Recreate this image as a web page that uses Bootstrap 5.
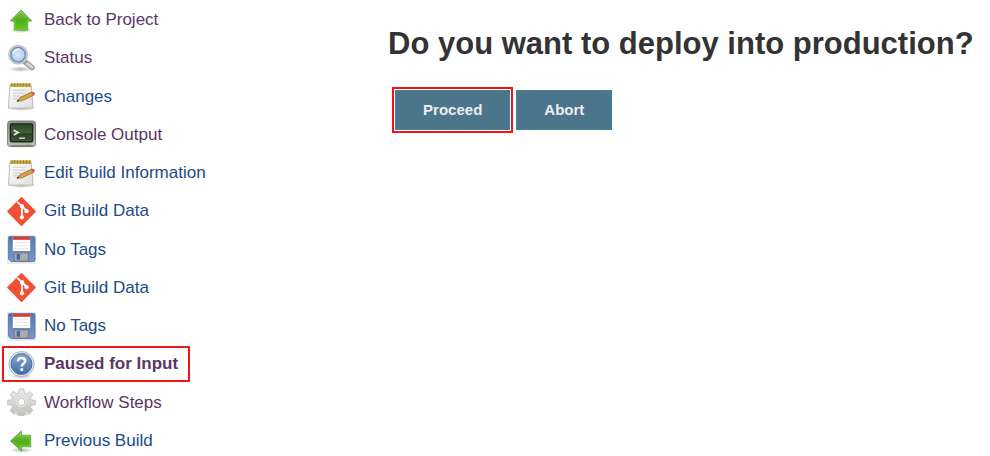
<!DOCTYPE html>
<html lang="en">
<head>
<meta charset="utf-8">
<meta name="viewport" content="width=device-width, initial-scale=1">
<title>Paused for Input</title>
<link href="https://cdn.jsdelivr.net/npm/bootstrap@5.3.0/dist/css/bootstrap.min.css" rel="stylesheet">
<style>
body { font-family: "Liberation Sans", Arial, sans-serif; color: #333; background: #fff; }
.side { flex: 0 0 39%; }
.task-list { padding: 5px 0 0 5px; }
.task { font-size: 17px; line-height: 30px; gap: 8px; padding: 0 9px 0 2px; color: #204a87; }
.task svg { width: 29px; height: 29px; flex: none; }
.task.seen { color: #5c3566; }
.task.current { outline: 2px solid #f01414; outline-offset: 1px; }
.prompt { padding: 24px 0 0 2px; }
h1 { font-size: 31px; line-height: 40px; }
.actions { gap: 6px; padding: 2px 0 0 7px; }
.btn-step { --bs-btn-color: #eee; --bs-btn-bg: #4b758b; --bs-btn-border-color: #47809a; --bs-btn-hover-color: #fff; --bs-btn-hover-bg: #3b6478; --bs-btn-hover-border-color: #3b6478; --bs-btn-border-radius: 0; --bs-btn-font-size: 15px; --bs-btn-padding-x: 27px; --bs-btn-padding-y: 9px; line-height: 20px; }
.marked { outline: 2px solid #f01414; outline-offset: 1px; }
</style>
<script src="https://cdn.jsdelivr.net/npm/bootstrap@5.3.0/dist/js/bootstrap.bundle.min.js"></script>
</head>
<body>
<svg width="0" height="0" class="position-absolute" aria-hidden="true">
<defs>
<linearGradient id="green" x1="0" y1="0" x2="0" y2="1"><stop offset="0" stop-color="#8ac85c"/><stop offset=".5" stop-color="#4fae1c"/><stop offset="1" stop-color="#62c813"/></linearGradient>
<linearGradient id="silver" x1="0" y1="0" x2="0" y2="1"><stop offset="0" stop-color="#ebebe9"/><stop offset="1" stop-color="#c0c0bd"/></linearGradient>
<linearGradient id="paper" x1="0" y1="0" x2="1" y2="1"><stop offset="0" stop-color="#fff"/><stop offset="1" stop-color="#dededc"/></linearGradient>
<linearGradient id="crt" x1="0" y1="0" x2="0" y2="1"><stop offset="0" stop-color="#31482c"/><stop offset=".5" stop-color="#435f38"/><stop offset=".55" stop-color="#2b4027"/><stop offset="1" stop-color="#3f5937"/></linearGradient>
<linearGradient id="frame" x1="0" y1="0" x2="0" y2="1"><stop offset="0" stop-color="#8c8e88"/><stop offset="1" stop-color="#babdb6"/></linearGradient>
<linearGradient id="disk" x1="0" y1="0" x2="0" y2="1"><stop offset="0" stop-color="#5579b5"/><stop offset="1" stop-color="#7698cb"/></linearGradient>
<radialGradient id="glass"><stop offset="0" stop-color="#d8e8f8"/><stop offset="1" stop-color="#aecbec"/></radialGradient>
<linearGradient id="help" x1="0" y1="0" x2="0" y2="1"><stop offset="0" stop-color="#84a7d4"/><stop offset="1" stop-color="#426da6"/></linearGradient>
<radialGradient id="shade"><stop offset="0" stop-color="#000" stop-opacity=".3"/><stop offset="1" stop-color="#000" stop-opacity="0"/></radialGradient>
<symbol id="i-up" viewBox="0 0 30 30"><ellipse cx="15" cy="25" rx="12" ry="3" fill="url(#shade)"/><path d="M14.500 4L25.500 15.500H21.500V25H7.500V15.500H3.500Z" fill="url(#green)" stroke="#58a436" stroke-width=".8" stroke-linejoin="round"/><path d="M14.500 5.500L23 14.500H20.500V24H8.500V14.500H6Z" fill="none" stroke="#a9e17a" stroke-opacity=".35"/></symbol>
<symbol id="i-left" viewBox="0 0 30 30"><ellipse cx="15" cy="25" rx="12" ry="3" fill="url(#shade)"/><path d="M3.500 15.500L15 5V9.500H24.500V21.500H15V26Z" fill="url(#green)" stroke="#58a436" stroke-width=".8" stroke-linejoin="round"/><path d="M5.500 15.500L14 7.500V10.500H23.500V20.500H14V23.500Z" fill="none" stroke="#a9e17a" stroke-opacity=".35"/></symbol>
<symbol id="i-search" viewBox="0 0 30 30"><ellipse cx="14" cy="26" rx="13" ry="3" fill="url(#shade)"/><path d="M18 18L26 24.500" stroke="#999b96" stroke-width="5.500" stroke-linecap="round"/><path d="M21 20.500L26 24" stroke="#d3d3d0" stroke-width="3" stroke-linecap="round"/><circle cx="11.500" cy="11" r="9" fill="url(#glass)" stroke="#c3c5c2" stroke-width="2.600"/><circle cx="11.500" cy="11" r="7.400" fill="none" stroke="#658dc0" stroke-width="1.300"/><path d="M6.500 10A5 5 0 0 1 13 6" stroke="#fff" stroke-width="2" stroke-opacity=".6" fill="none"/></symbol>
<symbol id="i-note" viewBox="0 0 30 30"><ellipse cx="15" cy="27.500" rx="14" ry="2.500" fill="url(#shade)"/><path d="M3 3.500H25L27 27H1.500Z" fill="url(#paper)" stroke="#b8b9b5"/><path d="M3.500 1.500H25V5H3.500Z" fill="#c4a832"/><path d="M5 1V5M8 1V5M11 1V5M14 1V5M17 1V5M20 1V5M23 1V5" stroke="#9b8622" stroke-width="1"/><path d="M6 8.500H20M6 11.500H19M6 14.500H14M6 17.500H11" stroke="#cccdca"/><path d="M10.500 20L13.500 16L25.500 10.500L28 13.500L15.500 19.500Z" fill="#d8a042" stroke="#9e6820" stroke-width=".8"/><path d="M10.500 20L12 18.500" stroke="#333" stroke-width="1.300"/><path d="M24.500 11L26.500 10Q28.500 10 29 12L27.500 13.800Z" fill="#df4f42"/></symbol>
<symbol id="i-console" viewBox="0 0 30 30"><rect x=".5" y="1" width="29" height="26.500" rx="3" fill="url(#frame)" stroke="#858782"/><path d="M3 26H27L25 28H5Z" fill="#777a74"/><rect x="3.500" y="4" width="23" height="18.500" rx="1.500" fill="url(#crt)" stroke="#1c2819" stroke-width="1.400"/><path d="M7 10.500L11.500 13L7 15.500" fill="none" stroke="#dcefd6" stroke-width="1.800"/><path d="M12.500 18.800H18.500" stroke="#c2d9bb" stroke-width="1.600"/><path d="M20 25H22.500" stroke="#78c43e" stroke-width="1.500"/></symbol>
<symbol id="i-git" viewBox="0 0 30 30"><path d="M15 1L29 15L15 29L1 15Z" fill="#f05133" stroke="#f05133" stroke-width="1.800" stroke-linejoin="round"/><path d="M10.500 5L15.500 9.500V21.500M15.500 9.500L20.500 14.500" fill="none" stroke="#fff" stroke-width="1.900"/><circle cx="15.500" cy="9.500" r="2.200" fill="#fff"/><circle cx="20.200" cy="14.700" r="2.200" fill="#fff"/><circle cx="15.500" cy="21" r="2.200" fill="#fff"/></symbol>
<symbol id="i-disk" viewBox="0 0 30 30"><path d="M0 0H30V30H0Z" fill="#ececea"/><path d="M3 1.500H27.500Q29 1.500 29 3V25.500Q29 27.500 27 27.500H4.500L1.500 25V3Q1.500 1.500 3 1.500Z" fill="url(#disk)" stroke="#5d7db2"/><path d="M6 2H24V16.500H6Z" fill="#fff"/><path d="M6 2H24V5H6Z" fill="#e23b2b"/><path d="M8 8H22M8 11H22M8 14H22" stroke="#e5e5e5"/><path d="M7.500 18.500H22V27H7.500Z" fill="#a9aca9" stroke="#68707b" stroke-width=".8"/><path d="M10 19.500H13.500V25.500H10Z" fill="#4266a0"/><path d="M3 3.500H4.500" stroke="#263f67"/></symbol>
<symbol id="i-help" viewBox="0 0 30 30"><ellipse cx="15" cy="27" rx="12" ry="3" fill="url(#shade)"/><circle cx="15" cy="14.500" r="13" fill="#e0e5ec" stroke="#a3b3c8"/><circle cx="15" cy="14.500" r="10.800" fill="url(#help)" stroke="#3f6ba5"/><path d="M11.300 11.800Q11.500 8.300 15 8.300Q18.800 8.300 18.800 11.300Q18.800 13 17 14.200Q15.300 15.300 15.300 17" fill="none" stroke="#fff" stroke-width="2.600"/><circle cx="15.300" cy="20.300" r="1.600" fill="#fff"/></symbol>
<symbol id="i-gear" viewBox="0 0 30 30"><ellipse cx="15" cy="26.500" rx="11" ry="3" fill="url(#shade)"/><path d="M12.500 1H17.500L18 5L20.300 6L23.500 3.500L26.800 7L24.300 10L25.200 12.300L29.300 12.700V17.300L25.200 17.700L24.300 20L26.800 23.200L23.500 26.500L20.300 24L18 25L17.500 28.500H12.500L12 25L9.700 24L6.500 26.500L3.200 23.200L5.700 20L4.800 17.700L.7 17.300V12.700L4.800 12.300L5.700 10L3.200 7L6.500 3.500L9.700 6L12 5Z" fill="url(#silver)" stroke="#b9bab6" stroke-width=".8"/><circle cx="15" cy="14.500" r="4.600" fill="none" stroke="#e3e3e0" stroke-width="1.600"/><circle cx="15" cy="14.500" r="3.600" fill="#fff" stroke="#babbb7" stroke-width=".8"/></symbol>
</defs>
</svg>
<div class="d-flex min-vh-100">
<nav class="side" aria-label="Build tasks">
<ul class="task-list list-unstyled vh-100 d-flex flex-column justify-content-between align-items-start mb-0">
<li><a class="task seen d-flex align-items-center text-decoration-none" href="#"><svg aria-hidden="true"><use href="#i-up"/></svg>Back to Project</a></li>
<li><a class="task seen d-flex align-items-center text-decoration-none" href="#"><svg aria-hidden="true"><use href="#i-search"/></svg>Status</a></li>
<li><a class="task d-flex align-items-center text-decoration-none" href="#"><svg aria-hidden="true"><use href="#i-note"/></svg>Changes</a></li>
<li><a class="task seen d-flex align-items-center text-decoration-none" href="#"><svg aria-hidden="true"><use href="#i-console"/></svg>Console Output</a></li>
<li><a class="task d-flex align-items-center text-decoration-none" href="#"><svg aria-hidden="true"><use href="#i-note"/></svg>Edit Build Information</a></li>
<li><a class="task d-flex align-items-center text-decoration-none" href="#"><svg aria-hidden="true"><use href="#i-git"/></svg>Git Build Data</a></li>
<li><a class="task d-flex align-items-center text-decoration-none" href="#"><svg aria-hidden="true"><use href="#i-disk"/></svg>No Tags</a></li>
<li><a class="task d-flex align-items-center text-decoration-none" href="#"><svg aria-hidden="true"><use href="#i-git"/></svg>Git Build Data</a></li>
<li><a class="task d-flex align-items-center text-decoration-none" href="#"><svg aria-hidden="true"><use href="#i-disk"/></svg>No Tags</a></li>
<li><a class="task seen current fw-bold d-flex align-items-center text-decoration-none" href="#" aria-current="page"><svg aria-hidden="true"><use href="#i-help"/></svg>Paused for Input</a></li>
<li><a class="task seen d-flex align-items-center text-decoration-none" href="#"><svg aria-hidden="true"><use href="#i-gear"/></svg>Workflow Steps</a></li>
<li><a class="task d-flex align-items-center text-decoration-none" href="#"><svg aria-hidden="true"><use href="#i-left"/></svg>Previous Build</a></li>
</ul>
</nav>
<main class="prompt flex-grow-1">
<h1 class="fw-bold mb-4">Do you want to deploy into production?</h1>
<form class="actions d-flex">
<button type="button" class="btn btn-step fw-bold marked">Proceed</button>
<button type="button" class="btn btn-step fw-bold">Abort</button>
</form>
</main>
</div>
</body>
</html>
